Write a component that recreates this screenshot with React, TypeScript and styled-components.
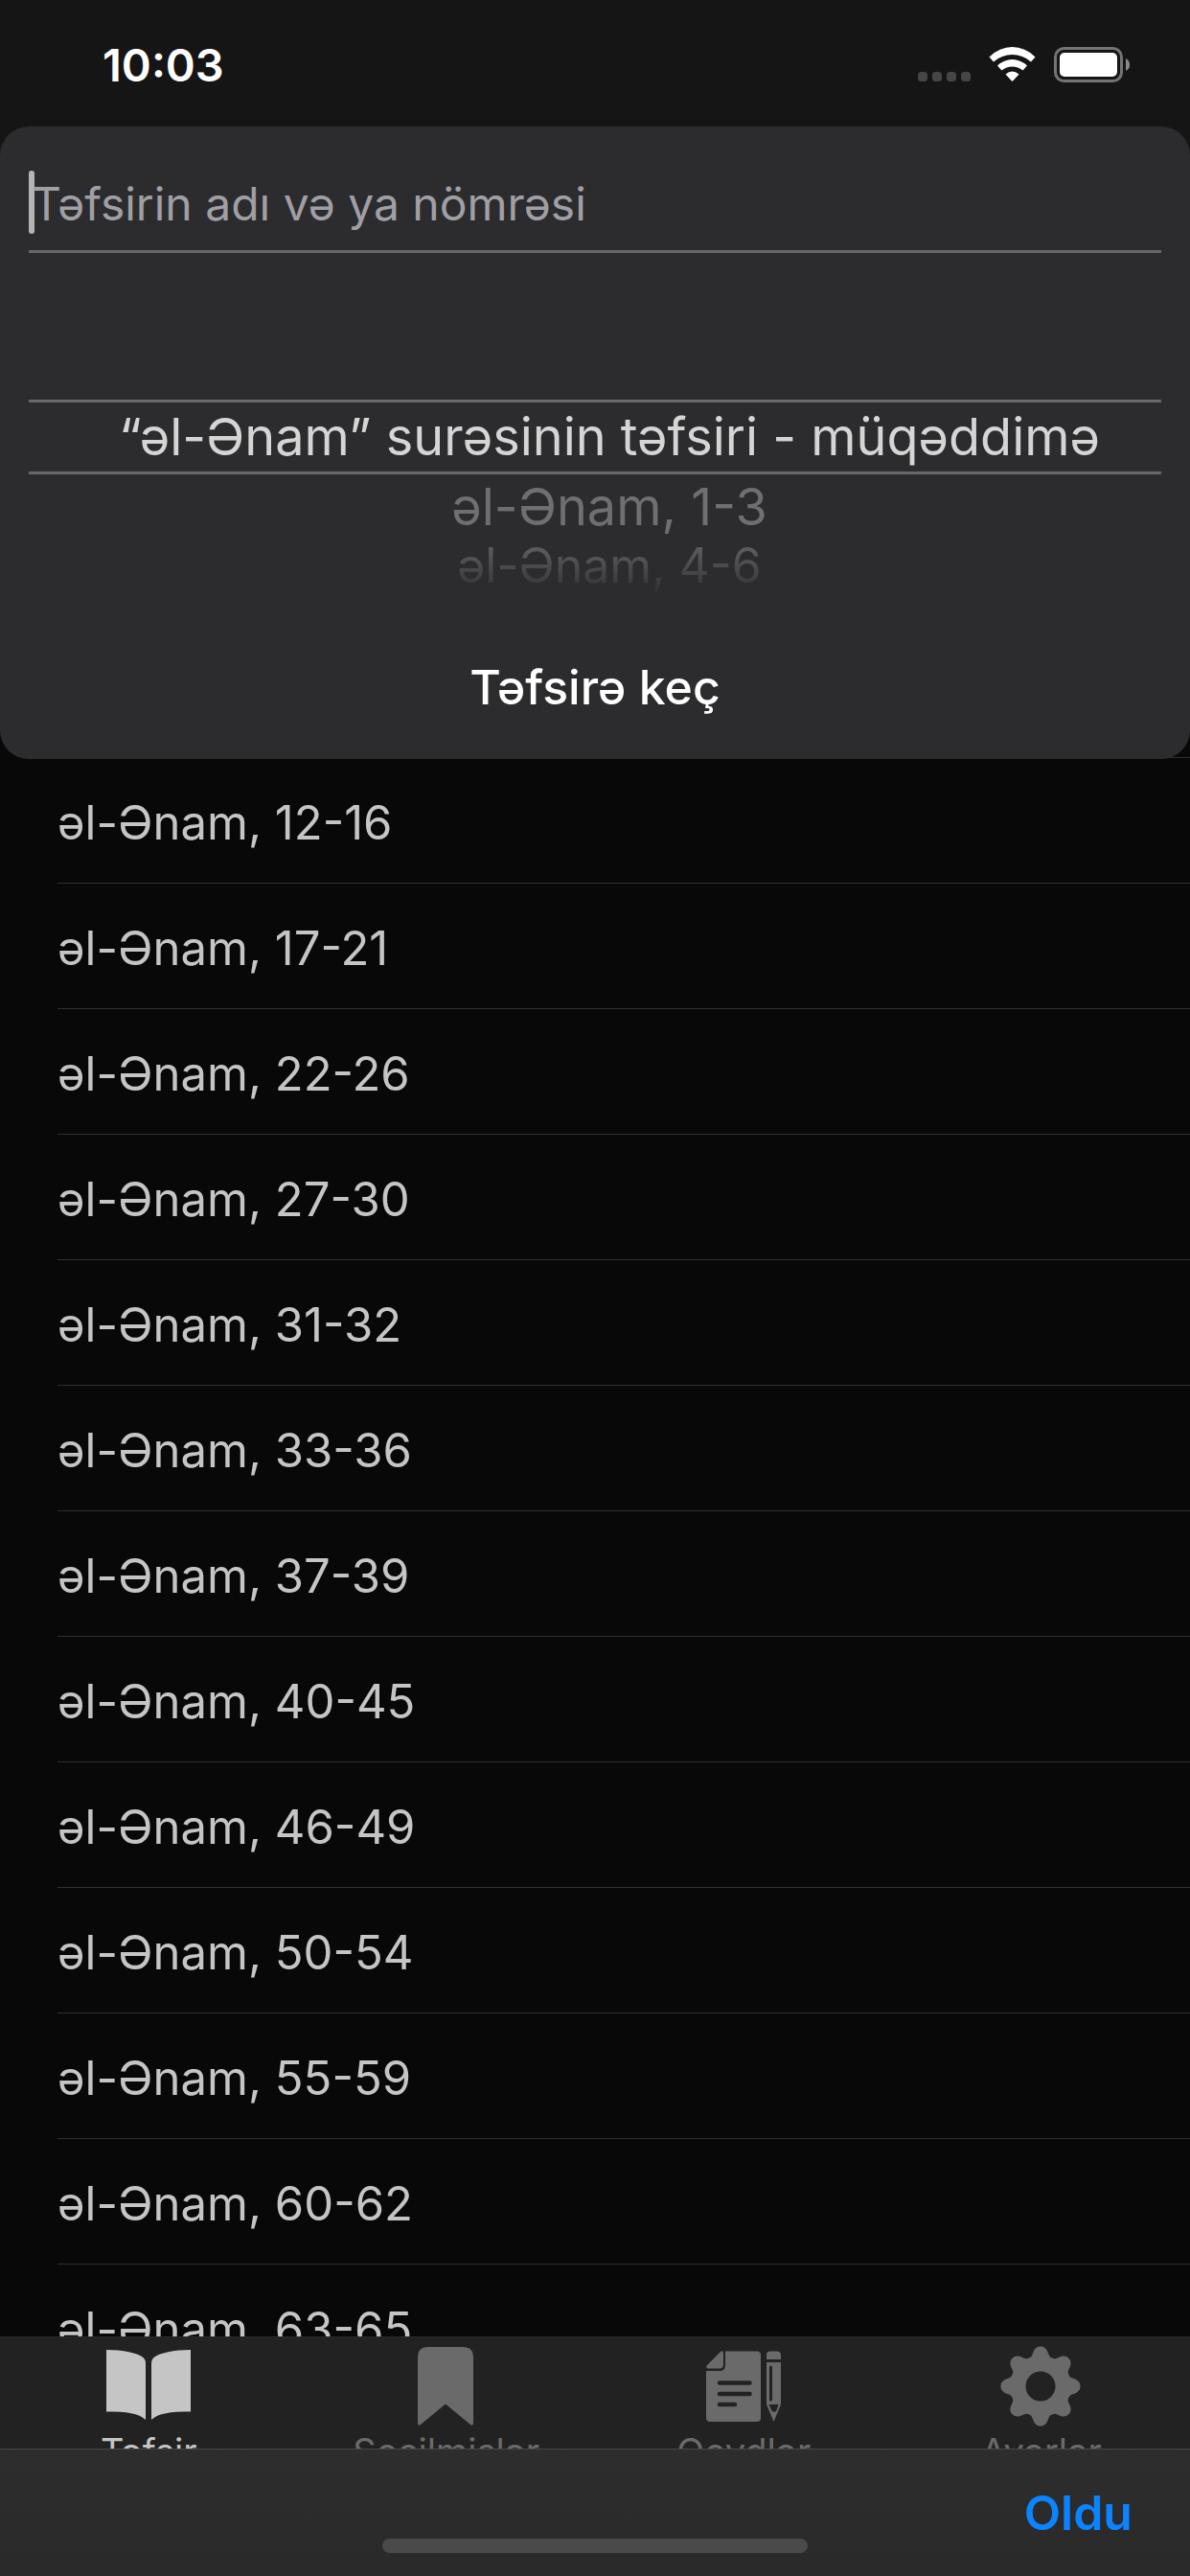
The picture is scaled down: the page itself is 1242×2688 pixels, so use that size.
import React, { useState } from "react";
import styled, { createGlobalStyle } from "styled-components";

const GlobalStyle = createGlobalStyle`
  *, *::before, *::after { box-sizing: border-box; }
  body { margin: 0; background: #080808; }
  body, button, input { font-family: Inter, "Noto Sans", sans-serif; }
  button { padding: 0; border: 0; background: none; color: inherit; cursor: pointer; }
  ul { margin: 0; padding: 0; list-style: none; }
`;

const Screen = styled.div`
  display: flex;
  flex-direction: column;
  height: 100vh;
  overflow: hidden;
  background: #080808;
`;

const StatusBar = styled.header`
  display: flex;
  justify-content: space-between;
  flex: none;
  height: 132px;
  padding: 0 63px 0 107px;
  background: #151515;
  color: #fff;
`;

const Clock = styled.time`
  font-size: 47px;
  font-weight: 600;
  line-height: 136px;
`;

const StatusIcons = styled.svg`
  margin-top: 48px;
`;

const SheetArea = styled.section`
  flex: none;
  background: linear-gradient(#151515 50%, transparent 50%);
  z-index: 1;
`;

const Sheet = styled.form`
  display: flex;
  flex-direction: column;
  padding: 0 30px;
  border-radius: 30px;
  background: #2c2c2e;
`;

const Field = styled.label`
  display: flex;
  padding: 46px 0 17px;
  border-bottom: 3px solid #68686b;
`;

const Caret = styled.span`
  flex: none;
  width: 6px;
  height: 66px;
  margin-right: -3px;
  border-radius: 3px;
  background: #b4b4b4;
`;

const SearchInput = styled.input`
  flex: 1;
  min-width: 0;
  height: 66px;
  padding: 2px 0 0;
  border: 0;
  outline: 0;
  background: transparent;
  color: #fff;
  font-size: 48px;
  &::placeholder { color: #a09fa5; opacity: 1; }
`;

const Picker = styled.div`
  display: flex;
  flex-direction: column;
  padding: 153px 0 24px;
`;

const PickerOption = styled.label<{ $distance: number }>`
  display: flex;
  justify-content: center;
  align-items: center;
  height: ${(p) => [78, 67, 56][p.$distance]}px;
  padding-left: 30px;
  border: solid #68686b;
  border-width: ${(p) => (p.$distance === 0 ? "3px 0" : "0")};
  color: ${(p) => (p.$distance === 0 ? "#d5d5d5" : "#6f6f71")};
  font-size: ${(p) => (p.$distance === 2 ? 50 : 54)}px;
  line-height: 56px;
  white-space: nowrap;
  cursor: pointer;
  ${(p) => p.$distance === 2 && "mask-image: linear-gradient(rgba(0, 0, 0, 0.7) 20%, rgba(0, 0, 0, 0.1));"}
`;

const PickerRadio = styled.input`
  appearance: none;
  width: 0;
  height: 0;
  margin: 0;
`;

const GoButton = styled.button`
  height: 150px;
  color: #fff;
  font-size: 50px;
  font-weight: 500;
`;

const ChapterList = styled.ul`
  flex: 1;
  min-height: 0;
  margin-top: -2px;
  overflow: hidden;
`;

const ChapterItem = styled.li`
  margin-left: 60px;
  border-top: 1px solid #303032;
`;

const ChapterLink = styled.a`
  display: block;
  padding-top: 6px;
  color: #c5c5c5;
  font-size: 49px;
  line-height: 124px;
  text-decoration: none;
`;

const TabBar = styled.nav`
  display: grid;
  grid-template-columns: repeat(4, 1fr);
  flex: none;
  height: 117px;
  overflow: hidden;
  border-top: 1px solid #2a2a2a;
  background: #222;
`;

const Tab = styled.button<{ $active: boolean }>`
  display: flex;
  flex-direction: column;
  align-items: center;
  height: 146px;
  padding-top: 6px;
  color: ${(p) => (p.$active ? "#c5c5c5" : "#6a6a6a")};
  font-size: 38px;
  font-weight: 400;
  line-height: 45px;
  svg { flex: none; margin-bottom: 3px; }
`;

const Toolbar = styled.footer`
  position: relative;
  display: flex;
  justify-content: flex-end;
  flex: none;
  height: 133px;
  padding: 0 60px;
  border-top: 1px solid #464646;
  background: linear-gradient(#2d2d2d, #2a2a2a);
`;

const DoneButton = styled.button`
  color: #0a84ff;
  font-size: 50px;
  font-weight: 600;
`;

const HomeIndicator = styled.span`
  position: absolute;
  bottom: 24px;
  left: 50%;
  width: 444px;
  height: 15px;
  margin-left: -222px;
  border-radius: 8px;
  background: #4a4a4a;
`;

const BookIcon = () => (
  <svg width="90" height="88" viewBox="0 0 90 88" fill="currentColor" aria-hidden="true">
    <path d="M1 7C18 7 34 10 40 15.500Q42 17.500 42 21V80C35 73 22 71.500 1 71.500Z" />
    <path d="M89 7C72 7 56 10 50 15.500Q48 17.500 48 21V80C55 73 68 71.500 89 71.500Z" />
  </svg>
);

const BookmarkIcon = () => (
  <svg width="90" height="88" viewBox="0 0 90 88" fill="currentColor" aria-hidden="true">
    <path d="M15 15Q15 4 26 4H62Q73 4 73 15V83Q73 87 70 85L44 63.500L18 85Q15 87 15 83Z" />
  </svg>
);

const NotesIcon = () => (
  <svg width="90" height="88" viewBox="0 0 90 88" fill="none" aria-hidden="true">
    <path d="M6 29H20Q26 29 26 23V8.500H59Q63 8.500 63 12.500V78Q63 82 59 82H10Q6 82 6 78Z" fill="currentColor" />
    <path d="M24 10V22Q24 26.500 19.500 26.500H8Q5 26 7 23L20.500 9.500Q23 7 24 10Z" fill="currentColor" />
    <path d="M20 41.500H51.500M20 53H51.500M20 64H36" stroke="#222" strokeWidth="4.500" strokeLinecap="round" />
    <path d="M69 17V12.500Q69 8.500 73 8.500H80Q84 8.500 84 12.500V17Z" fill="currentColor" />
    <path d="M69 20H84V64L76.500 82L69 64Z" fill="currentColor" />
    <path d="M73.500 25V59" stroke="#222" strokeWidth="3" strokeLinecap="round" />
    <path d="M71.500 64H81.500L79 71.500H75Z" fill="#222" />
  </svg>
);

const toothAngles = [0, 45, 90, 135, 180, 225, 270, 315];

const GearIcon = () => (
  <svg width="90" height="88" viewBox="0 0 90 88" aria-hidden="true">
    <g transform="translate(44 45)" fill="currentColor">
      {toothAngles.map((angle) => (
        <path
          key={angle}
          transform={`rotate(${angle})`}
          d="M0 -41.500C4 -41.500 6.500 -39 8 -34.500C9.500 -30 11 -29 14 -29L7 -14H-7L-14 -29C-11 -29 -9.500 -30 -8 -34.500C-6.500 -39 -4 -41.500 0 -41.500Z"
        />
      ))}
      <circle r="23" fill="none" stroke="currentColor" strokeWidth="15" />
      <circle r="15.500" fill="#222" />
    </g>
  </svg>
);

const pickerOptions = ["“əl-Ənam” surəsinin təfsiri - müqəddimə", "əl-Ənam, 1-3", "əl-Ənam, 4-6"];

const verseRanges = [
  "12-16", "17-21", "22-26", "27-30", "31-32", "33-36", "37-39",
  "40-45", "46-49", "50-54", "55-59", "60-62", "63-65",
];

const tabs = [
  { label: "Təfsir", Icon: BookIcon },
  { label: "Seçilmişlər", Icon: BookmarkIcon },
  { label: "Qeydlər", Icon: NotesIcon },
  { label: "Ayarlar", Icon: GearIcon },
];

export default function App() {
  const [query, setQuery] = useState("");

  return (
    <Screen>
      <GlobalStyle />
      <StatusBar>
        <Clock>10:03</Clock>
        <StatusIcons width="222" height="40" viewBox="956 48 222 40" fill="none" aria-hidden="true">
          {[957, 972, 987, 1002].map((x) => (
            <rect key={x} x={x} y="75" width="10" height="10" rx="3.500" fill="#464646" />
          ))}
          <path d="M1031.500 59.500Q1042 49 1055.500 49T1079.500 59.500L1075 64.500Q1066.500 57 1055.500 57T1036 64.500Z" fill="#fff" />
          <path d="M1040 68.500Q1047 62 1055.500 62T1071 68.500L1066.500 73.500Q1061.500 69.500 1055.500 69.500T1044.500 73.500Z" fill="#fff" />
          <path d="M1048.500 77.500Q1052 74.500 1055.500 74.500T1062.500 77.500L1056.500 84Q1055.500 85.500 1054.500 84Z" fill="#fff" />
          <rect x="1100.500" y="50.500" width="69" height="34" rx="9" stroke="#747474" strokeWidth="3" />
          <rect x="1105" y="55" width="60" height="25" rx="5" fill="#fff" />
          <path d="M1174 61Q1178 63 1178 67.500T1174 74Z" fill="#8a8a8a" />
        </StatusIcons>
      </StatusBar>

      <SheetArea>
        <Sheet onSubmit={(e) => e.preventDefault()}>
          <Field>
            <Caret />
            <SearchInput
              aria-label="Təfsirin adı və ya nömrəsi"
              placeholder="Təfsirin adı və ya nömrəsi"
              value={query}
              onChange={(e) => setQuery(e.target.value)}
            />
          </Field>
          <Picker role="radiogroup">
            {pickerOptions.map((option, index) => (
              <PickerOption key={option} $distance={index}>
                <PickerRadio type="radio" name="chapter" defaultChecked={index === 0} />
                {option}
              </PickerOption>
            ))}
          </Picker>
          <GoButton type="submit">Təfsirə keç</GoButton>
        </Sheet>
      </SheetArea>

      <ChapterList>
        {verseRanges.map((range) => (
          <ChapterItem key={range}>
            <ChapterLink href={`#${range}`}>əl-Ənam, {range}</ChapterLink>
          </ChapterItem>
        ))}
      </ChapterList>

      <TabBar>
        {tabs.map(({ label, Icon }, index) => (
          <Tab key={label} type="button" $active={index === 0}>
            <Icon />
            {label}
          </Tab>
        ))}
      </TabBar>

      <Toolbar>
        <DoneButton type="button">Oldu</DoneButton>
        <HomeIndicator />
      </Toolbar>
    </Screen>
  );
}
